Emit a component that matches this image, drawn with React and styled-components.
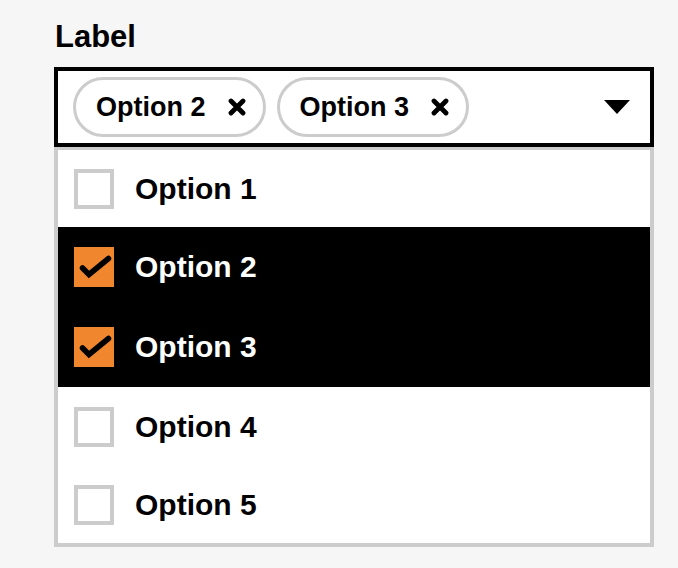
import React, { useState } from 'react';
import styled, { createGlobalStyle } from 'styled-components';

const GlobalStyle = createGlobalStyle`
  body {
    margin: 0;
    background: #f6f6f6;
    font-family: "Liberation Sans", Arial, sans-serif;
    color: #000;
  }
`;

const Page = styled.div`
  padding: 22px 0 0 54px;
  width: 600px;
`;

const Label = styled.div`
  font-size: 31px;
  line-height: 30px;
  font-weight: bold;
  margin: 0 0 15px 1px;
`;

const SelectBox = styled.div`
  box-sizing: border-box;
  height: 80px;
  border: 4px solid #000;
  background: #fff;
  display: flex;
  align-items: center;
  padding: 0 20px 0 15px;
  gap: 11px;
`;

const Chip = styled.div`
  box-sizing: border-box;
  height: 60px;
  border: 3px solid #ccc;
  border-radius: 30px;
  display: flex;
  align-items: center;
  gap: 22px;
  padding: 0 17px 0 20px;
  font-size: 27px;
  font-weight: bold;
  background: #fff;
`;

const Caret = styled.div`
  margin-left: auto;
  width: 0;
  height: 0;
  border-left: 13.5px solid transparent;
  border-right: 13.5px solid transparent;
  border-top: 14px solid #000;
`;

const Menu = styled.ul`
  list-style: none;
  margin: 0;
  padding: 0;
  background: #fff;
  border: 4px solid #ccc;
  border-top-width: 3px;
`;

const Row = styled.li`
  height: 80px;
  display: flex;
  align-items: center;
  gap: 21px;
  padding-left: 16px;
  font-size: 30px;
  font-weight: bold;
  background: ${(p) => (p.selected ? '#000' : '#fff')};
  color: ${(p) => (p.selected ? '#fff' : '#000')};
  &:first-child { height: 77px; }
  &:last-child { height: 76px; }
`;

const Box = styled.span`
  box-sizing: border-box;
  width: 40px;
  height: 40px;
  flex: none;
  display: flex;
  border: ${(p) => (p.checked ? 'none' : '4px solid #ccc')};
  background: ${(p) => (p.checked ? '#f0862e' : '#fff')};
`;

const CloseIcon = () => (
  <svg width="18" height="18" viewBox="0 0 18 18">
    <path d="M3 3 L15 15 M15 3 L3 15" stroke="#000" strokeWidth="4.8" strokeLinecap="round" />
  </svg>
);

const Check = () => (
  <svg width="40" height="40" viewBox="0 0 40 40">
    <path d="M8.5 21 L15 27.5 L34.5 11.5" fill="none" stroke="#000" strokeWidth="5.5" strokeLinecap="round" strokeLinejoin="miter" />
  </svg>
);

const OPTIONS = ['Option 1', 'Option 2', 'Option 3', 'Option 4', 'Option 5'];

const App = () => {
  const [selected] = useState(['Option 2', 'Option 3']);

  return (
    <Page>
      <GlobalStyle />
      <Label>Label</Label>
      <SelectBox>
        {selected.map((v) => (
          <Chip key={v}>
            {v}
            <CloseIcon />
          </Chip>
        ))}
        <Caret />
      </SelectBox>
      <Menu>
        {OPTIONS.map((v) => {
          const on = selected.includes(v);
          return (
            <Row key={v} selected={on}>
              <Box checked={on}>{on && <Check />}</Box>
              {v}
            </Row>
          );
        })}
      </Menu>
    </Page>
  );
};

export default App;
